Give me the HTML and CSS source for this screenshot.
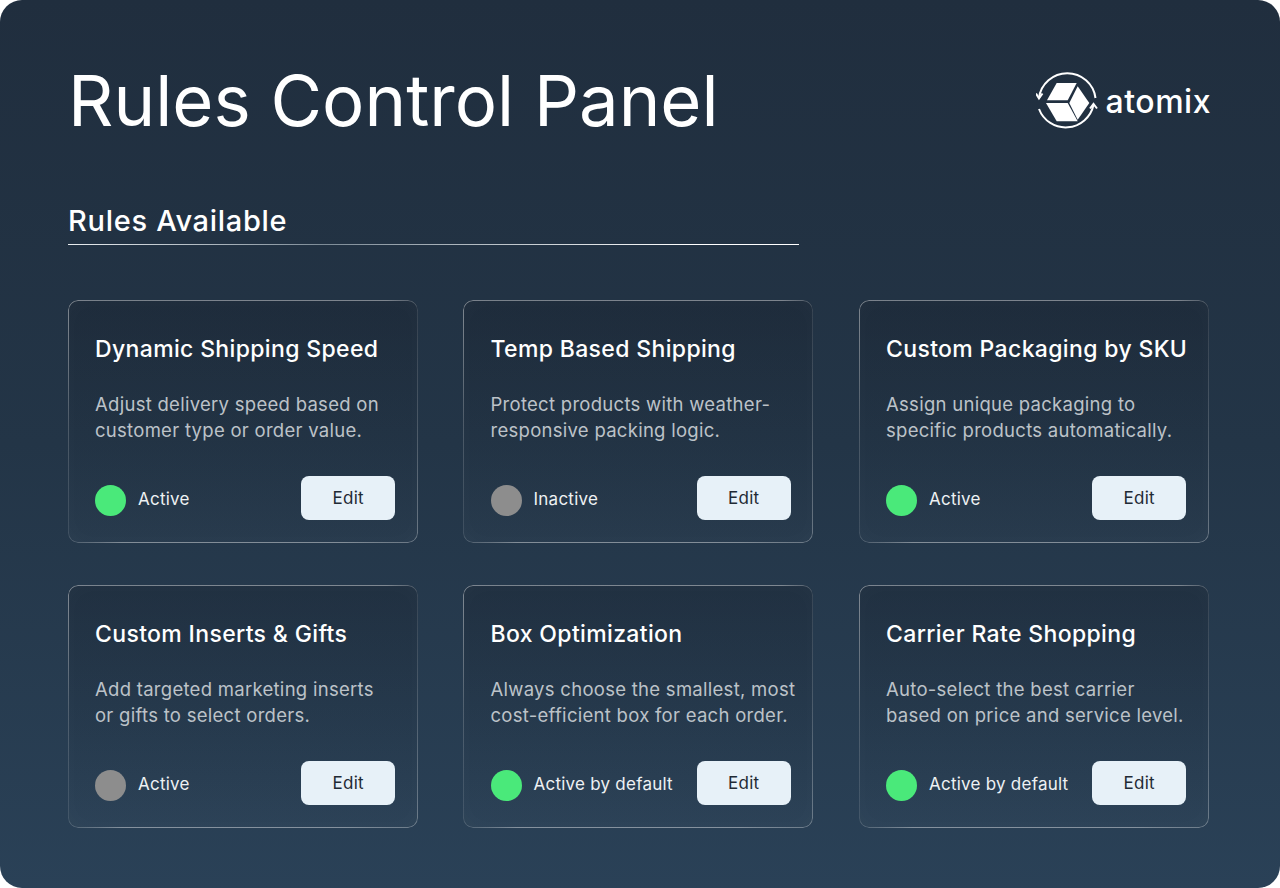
FILE: index.html
```html
<!DOCTYPE html>
<html lang="en">
<head>
    <meta charset="UTF-8">
    <title>Rules Control Panel</title>
    <link rel="stylesheet" href="styles.css">
</head>
<body>
    <div class="panel">
        <div class="top">
            <h1>Rules Control Panel</h1>
            <div class="logo">
                <svg class="logo-mark" width="66" height="66" viewBox="0 0 66 66">
                    <g fill="none" stroke="#fff" stroke-width="2">
                        <path d="M59.5 30 A28.5 28.5 0 0 0 3 30"/>
                        <path d="M3 41 A28.5 28.5 0 0 0 57.5 37"/>
                        <path d="M0 25.5 L3 30.5 L6.5 25.5"/>
                        <path d="M54 40.5 L57.5 36 L61 40.5"/>
                    </g>
                    <g fill="#fff">
                        <polygon points="20.7,15 40.7,15 31.7,32.3 11,32.3"/>
                        <polygon points="41.7,18.3 53.3,35 41.7,51.7 33.3,35"/>
                        <polygon points="10,35 31.7,35 41.7,53.3 20.7,53.3"/>
                    </g>
                </svg>
                <span class="logo-text">atomix</span>
            </div>
        </div>

        <h2>Rules Available</h2>
        <div class="rule-line"></div>

        <div class="cards">
            <div class="card">
                <h3>Dynamic Shipping Speed</h3>
                <p>Adjust delivery speed based on<br>customer type or order value.</p>
                <div class="card-foot">
                    <span class="dot on"></span>
                    <span class="status">Active</span>
                    <button class="edit">Edit</button>
                </div>
            </div>
            <div class="card">
                <h3>Temp Based Shipping</h3>
                <p>Protect products with weather-<br>responsive packing logic.</p>
                <div class="card-foot">
                    <span class="dot off"></span>
                    <span class="status">Inactive</span>
                    <button class="edit">Edit</button>
                </div>
            </div>
            <div class="card">
                <h3>Custom Packaging by SKU</h3>
                <p>Assign unique packaging to<br>specific products automatically.</p>
                <div class="card-foot">
                    <span class="dot on"></span>
                    <span class="status">Active</span>
                    <button class="edit">Edit</button>
                </div>
            </div>
            <div class="card">
                <h3>Custom Inserts &amp; Gifts</h3>
                <p>Add targeted marketing inserts<br>or gifts to select orders.</p>
                <div class="card-foot">
                    <span class="dot off"></span>
                    <span class="status">Active</span>
                    <button class="edit">Edit</button>
                </div>
            </div>
            <div class="card">
                <h3>Box Optimization</h3>
                <p>Always choose the smallest, most<br>cost-efficient box for each order.</p>
                <div class="card-foot">
                    <span class="dot on"></span>
                    <span class="status">Active by default</span>
                    <button class="edit">Edit</button>
                </div>
            </div>
            <div class="card">
                <h3>Carrier Rate Shopping</h3>
                <p>Auto-select the best carrier<br>based on price and service level.</p>
                <div class="card-foot">
                    <span class="dot on"></span>
                    <span class="status">Active by default</span>
                    <button class="edit">Edit</button>
                </div>
            </div>
        </div>
    </div>
</body>
</html>
```

FILE: styles.css
```css
html, body {
    margin: 0;
    background: #fff;
}
body {
    font-family: "Inter", "Noto Sans", sans-serif;
    color: #fff;
}
.panel {
    box-sizing: border-box;
    width: 1280px;
    height: 888px;
    padding: 60px 69px 0 68px;
    border-radius: 22px;
    background: linear-gradient(180deg, #202e3e 0%, #233547 50%, #2a4157 100%);
}
.top {
    display: flex;
    justify-content: space-between;
    align-items: center;
    height: 82px;
}
h1 {
    margin: 0;
    font-size: 70.6px;
    font-weight: 400;
    line-height: 82px;
}
.logo {
    display: flex;
    align-items: center;
    gap: 4px;
}
.logo-text {
    font-size: 32px;
    font-weight: 500;
    letter-spacing: 0.5px;
}
h2 {
    margin: 61px 0 0;
    font-size: 29px;
    font-weight: 500;
    line-height: 36px;
    letter-spacing: 0.7px;
}
.rule-line {
    width: 731px;
    height: 1px;
    margin-top: 5px;
    background: linear-gradient(90deg, #e9edf0 0%, #7d8b97 35%, #ffffff 85%, #ffffff 100%);
}
.cards {
    display: grid;
    grid-template-columns: repeat(3, 350px);
    grid-auto-rows: 243px;
    column-gap: 45.5px;
    row-gap: 42px;
    margin: 55px 0 0 -0.4px;
}
.card {
    position: relative;
    display: flex;
    flex-direction: column;
    box-sizing: border-box;
    padding: 32px 22.4px 23px 27.4px;
    border-radius: 10px;
    background: linear-gradient(180deg, rgba(20, 26, 36, 0.28) 0%, rgba(30, 40, 52, 0.12) 60%, rgba(255, 255, 255, 0.015) 100%);
    box-shadow: inset 0 0 26px rgba(255, 255, 255, 0.025);
}
/* 테두리: 모서리마다 밝기가 달라서 conic 그라디언트로 처리 */
.card::before {
    content: "";
    position: absolute;
    inset: 0;
    padding: 1px;
    border-radius: 10px;
    background: conic-gradient(
        rgba(255, 255, 255, 0.42) 0deg,
        rgba(255, 255, 255, 0.42) 50deg,
        rgba(255, 255, 255, 0.1) 58deg,
        rgba(255, 255, 255, 0.18) 90deg,
        rgba(255, 255, 255, 0.3) 125deg,
        rgba(255, 255, 255, 0.42) 140deg,
        rgba(255, 255, 255, 0.42) 225deg,
        rgba(255, 255, 255, 0.1) 238deg,
        rgba(255, 255, 255, 0.2) 270deg,
        rgba(255, 255, 255, 0.4) 300deg,
        rgba(255, 255, 255, 0.42) 360deg
    );
    -webkit-mask: linear-gradient(#000 0 0) content-box, linear-gradient(#000 0 0);
    -webkit-mask-composite: xor;
    mask-composite: exclude;
    pointer-events: none;
}
h3 {
    margin: 0;
    font-size: 23px;
    font-weight: 500;
    line-height: 34px;
    letter-spacing: 0.35px;
    white-space: nowrap;
}
.card p {
    margin: 25px 0 0;
    font-size: 18.5px;
    line-height: 26px;
    letter-spacing: 0.28px;
    color: #bcc2c8;
    white-space: nowrap;
}
.card-foot {
    display: flex;
    align-items: center;
    margin-top: auto;
}
.dot {
    width: 31px;
    height: 31px;
    border-radius: 50%;
    margin: 5px 12px 0 0;
}
.dot.on {
    background: #4ae97a;
}
.dot.off {
    background: #8d8d8d;
}
.status {
    margin-top: 2px;
    font-size: 17px;
    letter-spacing: 0.24px;
    color: #eef1f3;
}
.edit {
    width: 94px;
    height: 44px;
    margin-left: auto;
    padding: 0;
    border: 0;
    border-radius: 8px;
    background: #e7f1f8;
    color: #1f2a35;
    font-family: inherit;
    font-size: 17px;
    letter-spacing: 0.3px;
}
```
